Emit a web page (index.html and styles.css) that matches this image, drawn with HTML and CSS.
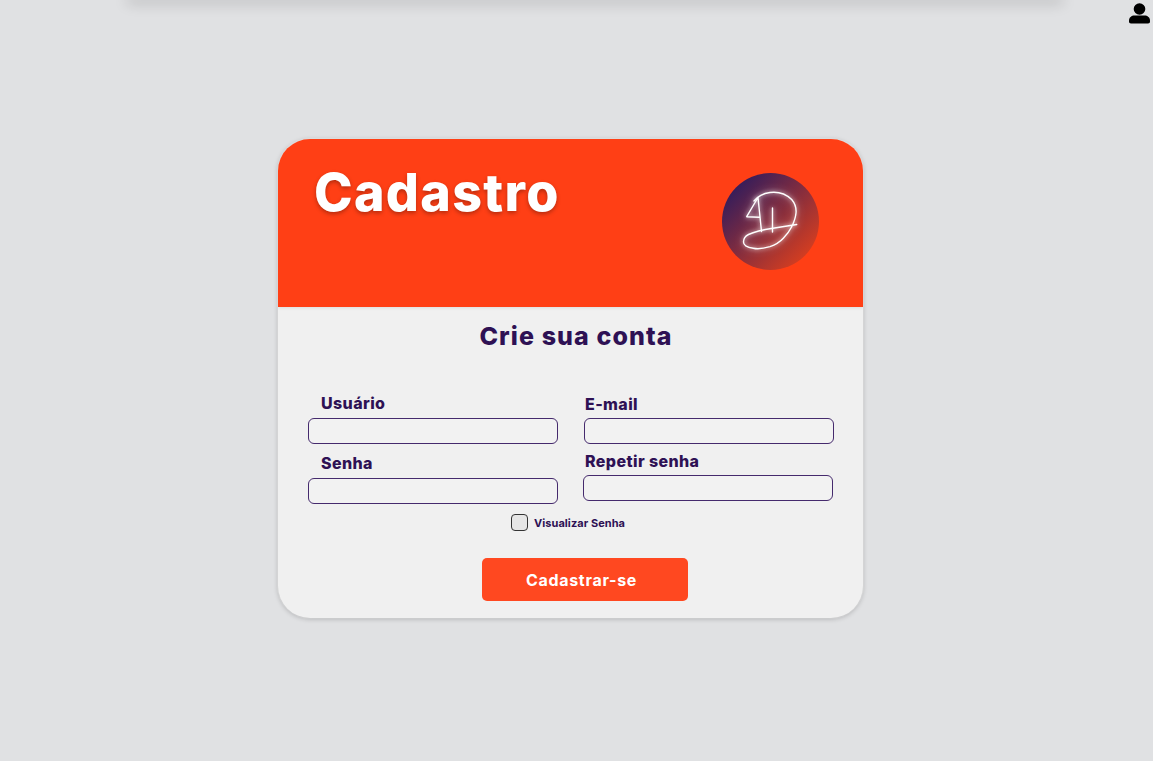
FILE: index.html
```html
<!DOCTYPE html>
<html lang="pt-BR">
<head>
    <meta charset="UTF-8">
    <meta name="viewport" content="width=device-width, initial-scale=1.0">
    <title>Cadastro</title>
    <link rel="stylesheet" href="styles.css">
</head>
<body>
    <div class="topbar"></div>
    <a class="user-icon" href="#" aria-label="Usuário">
        <svg viewBox="0 0 21 21" width="21" height="21">
            <circle cx="10.500" cy="6" r="5.800"/>
            <path d="M2 20.500C.7 20.500 0 19.700 0 18.500V17.500C0 14.500 2.500 12.500 5.500 12.500H15.500C18.500 12.500 21 14.500 21 17.500V18.500C21 19.700 20.300 20.500 19 20.500Z"/>
        </svg>
    </a>

    <main class="page">
        <section class="card">
            <header class="card-header">
                <h1>Cadastro</h1>
                <div class="logo">
                    <svg viewBox="0 0 97 97" width="97" height="97">
                        <path d="M36 24.500 24.700 43.700 37 44.300M36 24.500 39.500 58.500M50.500 35V59"/>
                        <path d="M32 28C36 23 41 20.500 48 19.500 56 18.500 64 21 69.700 26.500 73 30.500 74.500 35 74 40 73.500 46 72 49 69.700 53.700 67 59 64.500 62 61.300 65.300 57 70 53 72 48 73.700 42 75.500 36 76.500 31.300 75.300 26 74.500 21.500 73 21.500 69 21.500 65 23.500 63 26.500 61.500 32 59 40 57 51 55.300L74.700 51.500"/>
                    </svg>
                </div>
            </header>

            <form class="card-body">
                <h2>Crie sua conta</h2>
                <div class="fields">
                    <div class="col col-left">
                        <div class="field">
                            <label for="usuario">Usuário</label>
                            <input id="usuario" type="text">
                        </div>
                        <div class="field">
                            <label for="senha">Senha</label>
                            <input id="senha" type="password">
                        </div>
                    </div>
                    <div class="col col-right">
                        <div class="field field-email">
                            <label for="email">E-mail</label>
                            <input id="email" type="email">
                        </div>
                        <div class="field field-repeat">
                            <label for="repetir">Repetir senha</label>
                            <input id="repetir" type="password">
                        </div>
                    </div>
                </div>
                <label class="show-pass">
                    <input type="checkbox">
                    <span>Visualizar Senha</span>
                </label>
                <button class="submit" type="button">Cadastrar-se</button>
            </form>
        </section>
    </main>
</body>
</html>
```

FILE: styles.css
```css
* {
    box-sizing: border-box;
}

html, body {
    height: 100%;
}

body {
    margin: 0;
    background: #e0e1e3;
    font-family: 'Inter', sans-serif;
    color: #2e1154;
    overflow: hidden;
}

/* bar that is mostly off screen, only its shadow shows */
.topbar {
    height: 0;
    margin: 0 93px 0 130px;
    box-shadow: 0 0 14px 3px rgba(0, 0, 0, 0.22);
}

.user-icon {
    position: absolute;
    top: 3px;
    right: 3px;
    display: block;
    line-height: 0;
}

.user-icon svg {
    fill: #000;
}

.page {
    display: flex;
    justify-content: center;
    padding: 139px 12px 0 0;
}

.card {
    width: 585px;
    height: 479px;
    border-radius: 32px;
    background: #f0f0f0;
    overflow: hidden;
    box-shadow: 0 1px 5px rgba(0, 0, 0, 0.22), 0 0 0 1px rgba(255, 255, 255, 0.3);
}

.card-header {
    height: 168px;
    background: #ff3f15;
    display: flex;
    justify-content: space-between;
    align-items: flex-start;
    padding: 21px 44px 0 36px;
    box-shadow: 0 1px 3px rgba(0, 0, 0, 0.08);
}

.card-header h1 {
    margin: 0;
    font-size: 52px;
    line-height: 66px;
    font-weight: 800;
    color: #fff;
    letter-spacing: 1.300px;
    text-shadow: 0 2px 4px rgba(0, 0, 0, 0.3);
}

.logo {
    width: 97px;
    height: 97px;
    margin-top: 13px;
    border-radius: 50%;
    background: linear-gradient(135deg, #321c5c 12%, #e0401c 92%);
    line-height: 0;
}

.logo svg {
    fill: none;
    stroke: #fff;
    stroke-width: 1.400;
    stroke-linecap: round;
    stroke-linejoin: round;
    filter: drop-shadow(0 0 2px rgba(255, 255, 255, 0.8)) drop-shadow(0 0 4px rgba(255, 255, 255, 0.35));
}

.card-body {
    display: flex;
    flex-direction: column;
    align-items: center;
}

.card-body h2 {
    margin: 13px 0 0 11px;
    font-size: 25px;
    line-height: 32px;
    font-weight: 800;
    letter-spacing: 1.100px;
}

.fields {
    display: flex;
    align-self: flex-start;
    margin: 42px 0 0 30px;
    gap: 26px;
}

.col {
    width: 250px;
}

.field label {
    display: block;
    height: 24px;
    padding-left: 13px;
    font-size: 16px;
    line-height: 19px;
    font-weight: 800;
    letter-spacing: 0.400px;
}

.field input {
    display: block;
    width: 250px;
    height: 26px;
    border: 1px solid #452a6d;
    border-radius: 6px;
    background: #f2f2f2;
    outline: none;
}

.col-left .field + .field {
    margin-top: 10px;
}

.col-right {
    padding-top: 1px;
}

.field-email label {
    height: 23px;
    padding-left: 1px;
}

.field-email input {
    margin-left: 0;
}

.field-repeat {
    margin-top: 8px;
}

.field-repeat label {
    height: 23px;
    padding-left: 1px;
}

.field-repeat input {
    margin-left: -1px;
}

.show-pass {
    display: flex;
    align-items: center;
    gap: 6px;
    margin: 10px 0 0 -5px;
    font-size: 11px;
    line-height: 16px;
    font-weight: 700;
    letter-spacing: 0.060px;
}

.show-pass input {
    appearance: none;
    width: 17px;
    height: 17px;
    margin: 0;
    border: 1px solid #333;
    border-radius: 4px;
    background: #e6e6e6;
}

.submit {
    width: 206px;
    height: 43px;
    margin: 27px 0 0 29px;
    padding: 0 7px 0 0;
    border: 0;
    border-radius: 5px;
    background: #ff4820;
    color: #fff;
    font-family: inherit;
    font-size: 16px;
    font-weight: 700;
    letter-spacing: 0.700px;
}
```
